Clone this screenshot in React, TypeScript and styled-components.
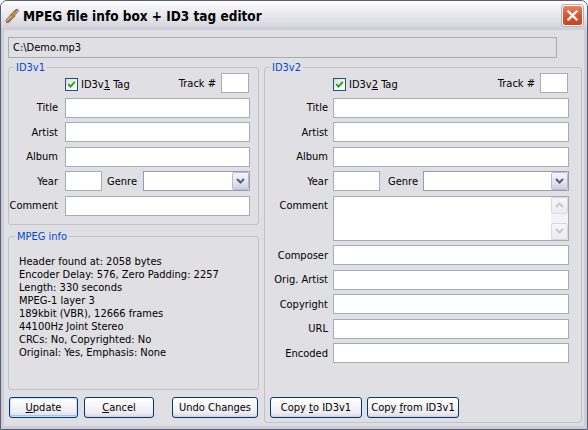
import React from 'react';
import styled, { createGlobalStyle } from 'styled-components';

const UI_FONT = '"DejaVu Sans Condensed", "Liberation Sans", Arial, sans-serif';

const Global = createGlobalStyle`
  html, body { margin: 0; padding: 0; background: #ffffff; }
  body { width: 588px; height: 430px; overflow: hidden; }
  *, *::before, *::after { box-sizing: border-box; }
`;

const Window = styled.div`
  width: 588px;
  height: 430px;
  display: flex;
  flex-direction: column;
  border: 1px solid #5c5c70;
  border-radius: 7px 7px 0 0;
  overflow: hidden;
  background: #c9c9d6;
  font-family: ${UI_FONT};
  font-size: 11px;
  color: #000;
`;

const TitleBar = styled.div`
  height: 29px;
  flex: none;
  display: flex;
  align-items: center;
  padding: 0 4px 0 3px;
  background: linear-gradient(180deg, #ffffff 0%, #f7f7fa 12%, #e9e9ef 45%, #dadae3 80%, #cbcbd7 100%);
`;

const TitleText = styled.span`
  margin-left: 3px;
  font-family: ${UI_FONT};
  font-weight: bold;
  font-size: 13.5px;
  color: #000;
  white-space: nowrap;
`;

const CloseButton = styled.div`
  margin-left: auto;
  width: 21px;
  height: 21px;
  border-radius: 3px;
  border: 1px solid #ffffff;
  box-shadow: 0 0 0 1px #b9b0b8;
  background: linear-gradient(180deg, #ec8264 0%, #dc5630 45%, #c8431f 100%);
  display: flex;
  align-items: center;
  justify-content: center;
`;

const Frame = styled.div`
  flex: 1;
  display: flex;
  padding: 0 3px 3px;
  background: #cdcdd9;
`;

const Client = styled.div`
  flex: 1;
  display: flex;
  flex-direction: column;
  padding: 7px 0 0 4px;
  background: #e0dfe3;
`;

const PathField = styled.input`
  width: 549px;
  height: 21px;
  border: 1px solid #a5acb5;
  background: #e0dfe3;
  padding: 0 4px;
  font-family: ${UI_FONT};
  font-size: 11px;
  color: #000;
  outline: none;
  margin: 0;
`;

const Columns = styled.div`
  display: grid;
  grid-template-columns: 251px 318px;
  column-gap: 5px;
  margin-top: 9px;
  align-items: start;
`;

const LeftColumn = styled.div`
  display: flex;
  flex-direction: column;
`;

const Group = styled.div<{ $h: number; $mt?: number }>`
  position: relative;
  height: ${p => p.$h}px;
  margin-top: ${p => p.$mt ?? 0}px;
  border: 1px solid #c2c1c8;
  border-radius: 3px;
  display: flex;
  flex-direction: column;
`;

const Legend = styled.span<{ $left: number }>`
  position: absolute;
  top: -7px;
  left: ${p => p.$left}px;
  padding: 0 2px;
  background: #e0dfe3;
  color: #0046d5;
  line-height: 13px;
  white-space: nowrap;
`;

const FormGrid = styled.div<{ $label: number; $gap: number; $right: number }>`
  display: grid;
  grid-template-columns: ${p => p.$label}px 1fr;
  column-gap: ${p => p.$gap}px;
  row-gap: 4.5px;
  padding: 5px ${p => p.$right}px 0 0;
  align-items: center;
`;

const Label = styled.span<{ $top?: boolean }>`
  text-align: right;
  white-space: nowrap;
  line-height: 13px;
  align-self: ${p => (p.$top ? 'start' : 'center')};
  margin-top: ${p => (p.$top ? '3px' : '0')};
`;

const TextBox = styled.input<{ $w?: number }>`
  width: ${p => (p.$w ? `${p.$w}px` : '100%')};
  height: 20px;
  margin: 0;
  border: 1px solid #a5acb5;
  background: #ffffff;
  padding: 0 3px;
  font-family: ${UI_FONT};
  font-size: 11px;
  outline: none;
  flex: none;
`;

const TagRow = styled.div`
  display: flex;
  align-items: center;
  height: 20px;
  padding-right: 1px;
`;

const CheckLabel = styled.span`
  display: flex;
  align-items: center;
  gap: 3px;
  margin-top: 3px;
`;

const CheckBox = styled.span`
  width: 13px;
  height: 13px;
  border: 1px solid #1c5180;
  background: linear-gradient(135deg, #dcdcd7 0%, #f4f4f2 60%, #ffffff 100%);
  display: inline-flex;
  align-items: center;
  justify-content: center;
`;

const Mn = styled.span`
  text-decoration: underline;
`;

const TrackLabel = styled.span`
  margin-left: auto;
  margin-right: 5px;
  white-space: nowrap;
`;

const YearRow = styled.div`
  display: flex;
  align-items: center;
`;

const GenreLabel = styled.span<{ $pr: number }>`
  flex: 1;
  text-align: right;
  padding-right: ${p => p.$pr}px;
  white-space: nowrap;
`;

const Combo = styled.div<{ $w: number }>`
  width: ${p => p.$w}px;
  height: 20px;
  flex: none;
  border: 1px solid #8d9fbb;
  background: #ffffff;
  display: flex;
  justify-content: flex-end;
`;

const ComboButton = styled.span`
  width: 17px;
  height: 100%;
  border: 1px solid #b6bccb;
  border-radius: 2px;
  background: linear-gradient(180deg, #f4f4f8 0%, #e4e4ec 55%, #cfd0dc 100%);
  display: flex;
  align-items: center;
  justify-content: center;
`;

const CommentBox = styled.div`
  height: 45px;
  border: 1px solid #a5acb5;
  background: #ffffff;
  display: flex;
`;

const CommentArea = styled.textarea`
  flex: 1;
  border: none;
  resize: none;
  outline: none;
  padding: 1px 3px;
  font-family: ${UI_FONT};
  font-size: 11px;
  background: transparent;
`;

const ScrollBar = styled.div`
  width: 17px;
  display: flex;
  flex-direction: column;
  background: #f3f3f7;
`;

const ScrollButton = styled.span`
  height: 17px;
  flex: none;
  border: 1px solid #d8d8e0;
  border-radius: 2px;
  background: linear-gradient(180deg, #f6f6f8 0%, #ececf0 100%);
  display: flex;
  align-items: center;
  justify-content: center;
`;

const ScrollTrack = styled.span`
  flex: 1;
`;

const InfoText = styled.div`
  padding: 18px 0 0 10px;
  line-height: 13px;
  white-space: nowrap;
`;

const ButtonRow = styled.div<{ $pl: number; $mt?: string; $pb?: number }>`
  display: flex;
  gap: 5px;
  padding-left: ${p => p.$pl}px;
  padding-bottom: ${p => p.$pb ?? 0}px;
  margin-top: ${p => p.$mt ?? '0'};
`;

const Button = styled.button<{ $w: number; $ml?: number; $default?: boolean }>`
  width: ${p => p.$w}px;
  height: 21px;
  margin: 0 0 0 ${p => p.$ml ?? 0}px;
  padding: 0;
  border: 1px solid #003c74;
  border-radius: 3px;
  background: linear-gradient(180deg, #ffffff 0%, #f6f6f9 40%, #ebebf1 78%, #d9d9e3 100%);
  box-shadow: ${p =>
    p.$default
      ? 'inset 0 0 0 1px #cfe0fa, inset 0 -2px 0 0 #a9c3ee'
      : 'inset 0 -1px 0 0 #d2d2de'};
  font-family: ${UI_FONT};
  font-size: 11px;
  color: #000;
  white-space: nowrap;
`;

const AppIcon = () => (
  <svg width="16" height="16" viewBox="0 0 16 16">
    <path d="M1.8 12.4 L11.4 1.8 Q13.8 0.4 14.6 2.8 L5.2 14.2 Q2.6 15.6 1.8 12.4 Z" fill="#b4b4c2" stroke="#666676" strokeWidth="0.9" />
    <path d="M13.4 1.2 L6.6 6.8 L9 7.8 L2.4 14.8 L11 8.6 L8.6 7.6 Z" fill="#f8a01c" stroke="#b05a04" strokeWidth="0.8" strokeLinejoin="round" />
  </svg>
);

const CloseGlyph = () => (
  <svg width="11" height="11" viewBox="0 0 11 11">
    <path d="M1.5 1.5 L9.5 9.5 M9.5 1.5 L1.5 9.5" stroke="#ffffff" strokeWidth="2.3" strokeLinecap="square" />
  </svg>
);

const CheckGlyph = () => (
  <svg width="9" height="9" viewBox="0 0 9 9">
    <path d="M1.3 4.2 L3.5 6.6 L7.8 1.8" fill="none" stroke="#21a121" strokeWidth="1.9" />
  </svg>
);

const Chevron = ({ color }: { color: string }) => (
  <svg width="9" height="6" viewBox="0 0 9 6">
    <path d="M1 1 L4.5 4.5 L8 1" fill="none" stroke={color} strokeWidth="2" />
  </svg>
);

const ChevronUp = ({ color }: { color: string }) => (
  <svg width="9" height="6" viewBox="0 0 9 6">
    <path d="M1 5 L4.5 1.5 L8 5" fill="none" stroke={color} strokeWidth="2" />
  </svg>
);

type FieldProps = { label: string };
const Field = ({ label }: FieldProps) => (
  <>
    <Label>{label}</Label>
    <TextBox />
  </>
);

const mpegInfo = [
  'Header found at: 2058 bytes',
  'Encoder Delay: 576, Zero Padding: 2257',
  'Length: 330 seconds',
  'MPEG-1 layer 3',
  '189kbit (VBR), 12666 frames',
  '44100Hz Joint Stereo',
  'CRCs: No, Copyrighted: No',
  'Original: Yes, Emphasis: None',
];

export default function App() {
  return (
    <>
      <Global />
      <Window>
        <TitleBar>
          <AppIcon />
          <TitleText>MPEG file info box + ID3 tag editor</TitleText>
          <CloseButton>
            <CloseGlyph />
          </CloseButton>
        </TitleBar>
        <Frame>
          <Client>
            <PathField readOnly value={'C:\\Demo.mp3'} />
            <Columns>
              <LeftColumn>
                <Group $h={158}>
                  <Legend $left={5}>ID3v1</Legend>
                  <FormGrid $label={49} $gap={7} $right={8}>
                    <span />
                    <TagRow>
                      <CheckLabel>
                        <CheckBox>
                          <CheckGlyph />
                        </CheckBox>
                        <span>
                          ID3v<Mn>1</Mn> Tag
                        </span>
                      </CheckLabel>
                      <TrackLabel>Track #</TrackLabel>
                      <TextBox $w={28} />
                    </TagRow>
                    <Field label="Title" />
                    <Field label="Artist" />
                    <Field label="Album" />
                    <Label>Year</Label>
                    <YearRow>
                      <TextBox $w={37} />
                      <GenreLabel $pr={6}>Genre</GenreLabel>
                      <Combo $w={107}>
                        <ComboButton>
                          <Chevron color="#4d6185" />
                        </ComboButton>
                      </Combo>
                    </YearRow>
                    <Field label="Comment" />
                  </FormGrid>
                </Group>
                <Group $h={154} $mt={11}>
                  <Legend $left={6}>MPEG info</Legend>
                  <InfoText>
                    {mpegInfo.map(line => (
                      <div key={line}>{line}</div>
                    ))}
                  </InfoText>
                </Group>
                <ButtonRow $pl={1} $mt="7px">
                  <Button $w={69} $default>
                    <Mn>U</Mn>pdate
                  </Button>
                  <Button $w={70} $ml={1}>
                    <Mn>C</Mn>ancel
                  </Button>
                  <Button $w={86} $ml={13}>
                    Undo Changes
                  </Button>
                </ButtonRow>
              </LeftColumn>
              <Group $h={356}>
                <Legend $left={5}>ID3v2</Legend>
                <FormGrid $label={63} $gap={5} $right={12}>
                  <span />
                  <TagRow>
                    <CheckLabel>
                      <CheckBox>
                        <CheckGlyph />
                      </CheckBox>
                      <span>
                        ID3v<Mn>2</Mn> Tag
                      </span>
                    </CheckLabel>
                    <TrackLabel>Track #</TrackLabel>
                    <TextBox $w={28} />
                  </TagRow>
                  <Field label="Title" />
                  <Field label="Artist" />
                  <Field label="Album" />
                  <Label>Year</Label>
                  <YearRow>
                    <TextBox $w={47} />
                    <GenreLabel $pr={5}>Genre</GenreLabel>
                    <Combo $w={146}>
                      <ComboButton>
                        <Chevron color="#4d6185" />
                      </ComboButton>
                    </Combo>
                  </YearRow>
                  <Label $top>Comment</Label>
                  <CommentBox>
                    <CommentArea />
                    <ScrollBar>
                      <ScrollButton>
                        <ChevronUp color="#c6c6ce" />
                      </ScrollButton>
                      <ScrollTrack />
                      <ScrollButton>
                        <Chevron color="#c6c6ce" />
                      </ScrollButton>
                    </ScrollBar>
                  </CommentBox>
                  <Field label="Composer" />
                  <Field label="Orig. Artist" />
                  <Field label="Copyright" />
                  <Field label="URL" />
                  <Field label="Encoded" />
                </FormGrid>
                <ButtonRow $pl={5} $mt="auto" $pb={4}>
                  <Button $w={92}>
                    Copy <Mn>t</Mn>o ID3v1
                  </Button>
                  <Button $w={92}>
                    Copy <Mn>f</Mn>rom ID3v1
                  </Button>
                </ButtonRow>
              </Group>
            </Columns>
          </Client>
        </Frame>
      </Window>
    </>
  );
}
